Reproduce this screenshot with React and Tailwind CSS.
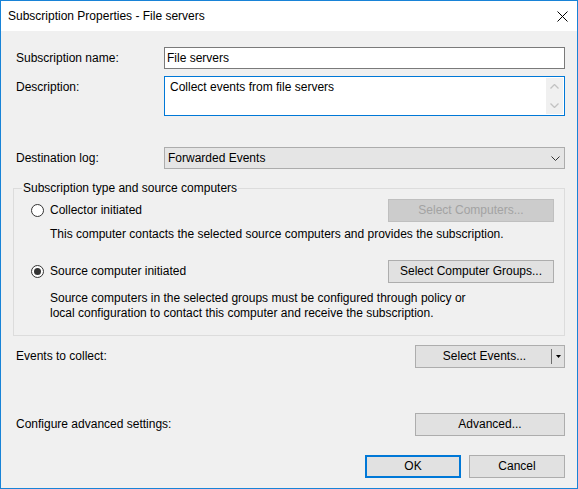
import React from 'react';

const font = { fontFamily: '"Segoe UI", "Liberation Sans", Arial, sans-serif' };

// Standard push button (Win10 look)
const Button = ({ children, className = '', disabled = false, primary = false }) => (
  <div
    className={
      'h-[23px] flex items-center justify-center text-[12px] leading-[15px] ' +
      (disabled
        ? 'bg-[#cccccc] border border-[#bfbfbf] text-[#a3a3a3] '
        : primary
        ? 'bg-[#e1e1e1] border-2 border-[#0078d7] text-black '
        : 'bg-[#e1e1e1] border border-[#adadad] text-black ') +
      className
    }
  >
    {children}
  </div>
);

const Radio = ({ checked, label }) => (
  <div className="flex items-center">
    <div className="w-[13px] h-[13px] rounded-full border border-[#333333] bg-white flex items-center justify-center">
      {checked && <div className="w-[7px] h-[7px] rounded-full bg-[#333333]" />}
    </div>
    <span className="ml-[6px] text-[12px] leading-[15px]">{label}</span>
  </div>
);

const Label = ({ children }) => (
  <div className="w-[151px] shrink-0 pl-[3px] text-[12px] leading-[15px] whitespace-nowrap">{children}</div>
);

export default function App() {
  return (
    <div style={font} className="w-[578px] h-[489px] border border-[#1883d7] bg-[#f0f0f0] flex flex-col text-black overflow-hidden">
      {/* Title bar */}
      <div className="h-[30px] bg-white flex items-center justify-between pl-[7px] pr-[9px] shrink-0">
        <span className="text-[12px] leading-[15px]">Subscription Properties - File servers</span>
        <svg width="11" height="11" viewBox="0 0 11 11" className="mt-[1px]">
          <path d="M0.5 0.5 L10.5 10.5 M10.5 0.5 L0.5 10.5" stroke="#000" strokeWidth="1" fill="none" />
        </svg>
      </div>

      <div className="flex-1 flex flex-col pl-[12px] pr-[12px] pt-[16px]">
        {/* Subscription name */}
        <div className="flex items-center h-[22px]">
          <Label>Subscription name:</Label>
          <div className="flex-1 h-[22px] border border-[#7a7a7a] bg-white flex items-center pl-[2px] text-[12px] leading-[15px]">
            File servers
          </div>
        </div>

        {/* Description */}
        <div className="flex items-start mt-[7px] h-[40px]">
          <div className="pt-[4px]">
            <Label>Description:</Label>
          </div>
          <div className="flex-1 h-[40px] border border-[#0078d7] bg-white flex">
            <div className="flex-1 pl-[5px] pt-[3px] text-[12px] leading-[15px]">Collect events from file servers</div>
            <div className="w-[17px] my-[1px] mr-[1px] bg-[#f0f0f0] flex flex-col items-center justify-between py-[6px]">
              <svg width="9" height="5" viewBox="0 0 9 5">
                <path d="M0.5 4.5 L4.5 0.5 L8.5 4.5" stroke="#c2c2c2" strokeWidth="1.3" fill="none" />
              </svg>
              <svg width="9" height="5" viewBox="0 0 9 5">
                <path d="M0.5 0.5 L4.5 4.5 L8.5 0.5" stroke="#c2c2c2" strokeWidth="1.3" fill="none" />
              </svg>
            </div>
          </div>
        </div>

        {/* Destination log */}
        <div className="flex items-center mt-[31px] h-[22px]">
          <Label>Destination log:</Label>
          <div className="flex-1 h-[22px] border border-[#acacac] bg-[#e5e5e5] flex items-center justify-between pl-[3px] pr-[4px] text-[12px] leading-[15px]">
            <span>Forwarded Events</span>
            <svg width="9" height="5" viewBox="0 0 9 5">
              <path d="M0.5 0.5 L4.5 4.5 L8.5 0.5" stroke="#333" strokeWidth="1" fill="none" />
            </svg>
          </div>
        </div>

        {/* Subscription type group */}
        <fieldset className="mt-[12px] border border-[#dcdcdc] pb-[14px]">
          <legend className="ml-[8px] px-[1px] text-[12px] leading-[15px]">Subscription type and source computers</legend>
          <div className="pl-[17px] pr-[10px]">
            <div className="flex items-center justify-between mt-[3px] h-[23px]">
              <Radio label="Collector initiated" />
              <Button disabled className="w-[166px]">Select Computers...</Button>
            </div>
            <div className="mt-[5px] pl-[19px] text-[12px] leading-[15px]">
              This computer contacts the selected source computers and provides the subscription.
            </div>
            <div className="flex items-center justify-between mt-[18px] h-[23px]">
              <Radio checked label="Source computer initiated" />
              <Button className="w-[166px]">Select Computer Groups...</Button>
            </div>
            <div className="mt-[8px] pl-[19px] text-[12px] leading-[15px]">
              Source computers in the selected groups must be configured through policy or
              <br />
              local configuration to contact this computer and receive the subscription.
            </div>
          </div>
        </fieldset>

        {/* Events to collect */}
        <div className="flex items-center justify-between mt-[9px] h-[23px]">
          <Label>Events to collect:</Label>
          <div className="w-[150px] h-[23px] bg-[#e1e1e1] border border-[#adadad] flex items-center text-[12px] leading-[15px]">
            <span className="flex-1 text-center pl-[2px]">Select Events...</span>
            <div className="w-[1px] h-[15px] bg-[#6d6d6d]" />
            <div className="w-[12px] flex justify-center">
              <svg width="5" height="3" viewBox="0 0 5 3">
                <path d="M0 0 L5 0 L2.5 3 Z" fill="#000" />
              </svg>
            </div>
          </div>
        </div>

        {/* Advanced */}
        <div className="flex items-center justify-between mt-[45px] h-[23px]">
          <Label>Configure advanced settings:</Label>
          <Button className="w-[150px]">Advanced...</Button>
        </div>

        {/* OK / Cancel */}
        <div className="flex justify-end gap-[8px] mt-[19px]">
          <Button primary className="w-[96px]">OK</Button>
          <Button className="w-[96px]">Cancel</Button>
        </div>
      </div>
    </div>
  );
}
